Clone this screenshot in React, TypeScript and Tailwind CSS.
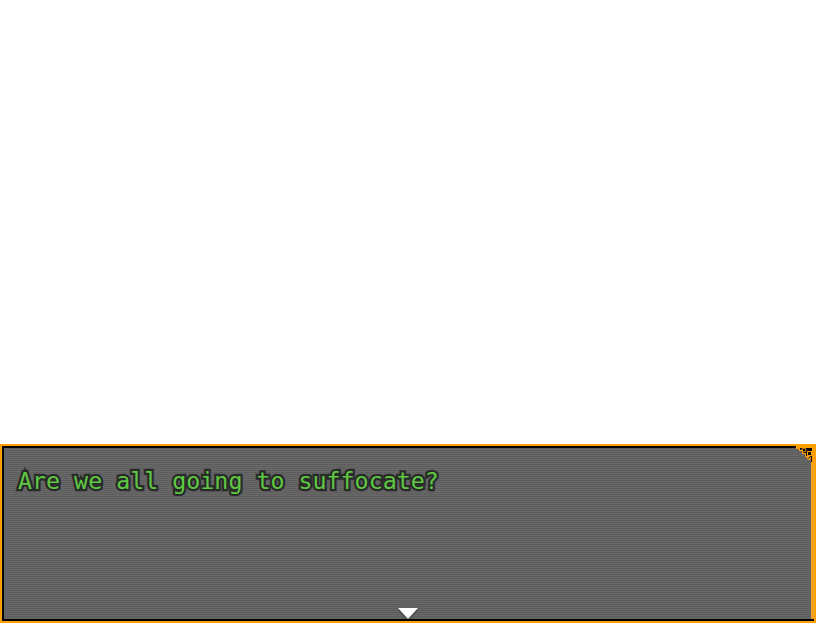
import React from "react";

const Corner = () => (
  <svg
    width="18"
    height="18"
    viewBox="0 0 18 18"
    className="absolute right-0 top-0"
    shapeRendering="crispEdges"
  >
    <path d="M0 0 H18 V18 H15 V13 H13 V11 H9 V8 H6 V5 H3 V3 H0 Z" fill="#ffa000" />
    <path d="M2 2 H16 V16 H15 V12 H13 V10 H10 V7 H7 V4 H4 V2 Z" fill="#000" />
    <circle cx="8" cy="4" r="2" fill="none" stroke="#ffa000" strokeWidth="1" shapeRendering="auto" />
    <rect x="11" y="5" width="4" height="4" fill="none" stroke="#ffa000" strokeWidth="1" />
    <circle cx="13" cy="12" r="1.6" fill="none" stroke="#ffa000" strokeWidth="1" shapeRendering="auto" />
  </svg>
);

export default function App() {
  return (
    <div className="h-[624px] w-full bg-white flex flex-col justify-end pb-[1px]">
      <div className="relative h-[179px] w-full border-2 border-[#ffa000] bg-black">
        <div className="h-full w-full border-2 border-black border-r-0">
          <div className="h-full w-full border-r-[3px] border-r-[#f0a020] flex flex-col bg-[repeating-linear-gradient(to_bottom,#5e5e5e_0px,#5e5e5e_1px,#686868_1px,#686868_2px)]">
            <p
              className="mt-[17px] ml-[14px] text-[23.3px] leading-[32px] text-[#5ec842] [font-family:'DejaVu_Sans_Mono',monospace] [-webkit-text-stroke:4.5px_#2a2a2a] [paint-order:stroke_fill]"
            >
              Are we all going to suffocate?
            </p>
            <div className="mt-auto flex justify-center">
              <svg width="20" height="11" viewBox="0 0 20 11" className="drop-shadow-[0_1px_1px_rgba(0,0,0,0.5)]">
                <path d="M0 0 H20 L10 11 Z" fill="#fff" />
              </svg>
            </div>
          </div>
        </div>
        <Corner />
      </div>
    </div>
  );
}
